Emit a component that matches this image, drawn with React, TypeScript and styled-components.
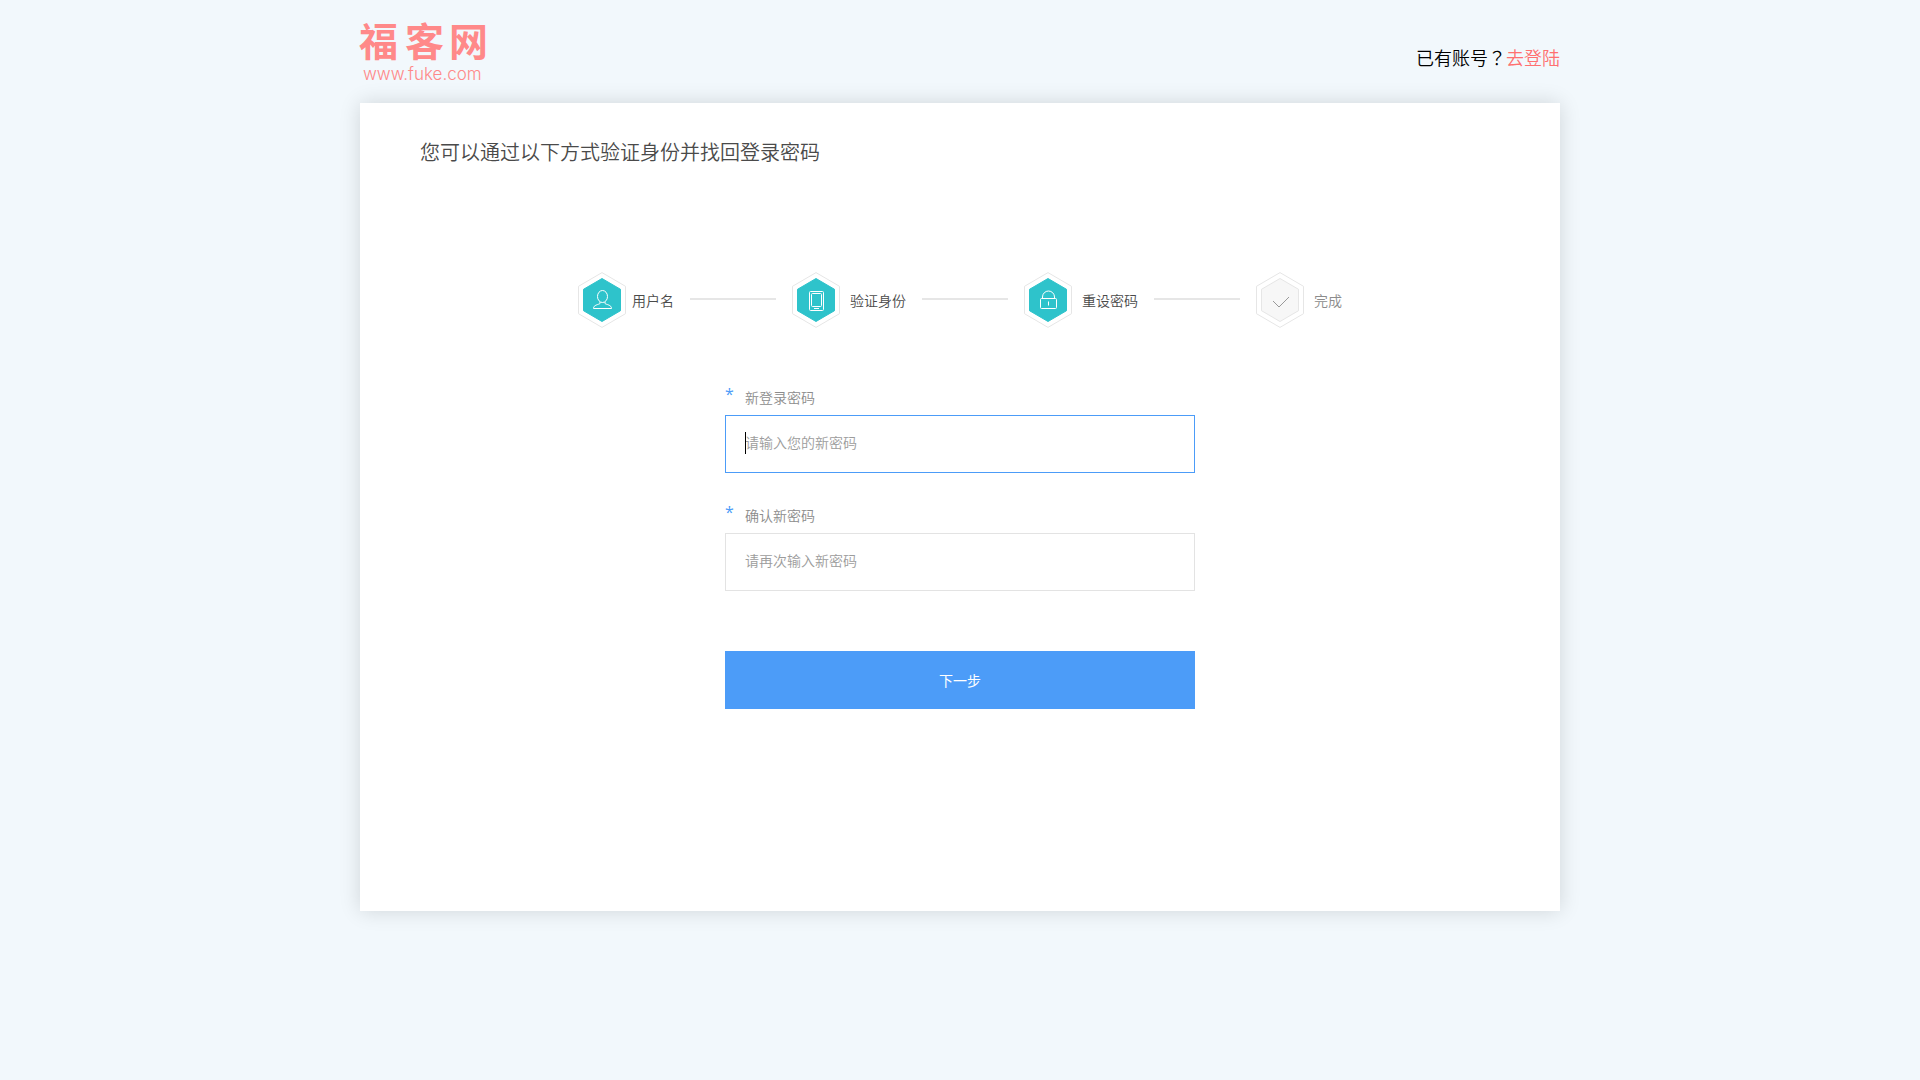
import React from 'react';
import styled, { createGlobalStyle } from 'styled-components';

const GlobalStyle = createGlobalStyle`
  * { box-sizing: border-box; }
  body {
    margin: 0;
    background: #f2f8fc;
    color: #4a4a4a;
    font: 350 14px/20px "Noto Sans CJK SC", "Noto Sans", sans-serif;
  }
`;

const Page = styled.div`
  max-width: 1200px;
  margin: 0 auto;
  padding-bottom: 80px;
`;

const Header = styled.header`
  display: flex;
  align-items: center;
  justify-content: space-between;
  padding: 16px 0 15px;
`;

const LogoLink = styled.a`
  display: block;
  height: 72px;
`;

const LogoMark = styled.svg`
  display: block;
  overflow: visible;
  fill: #ff8989;
`;

const LoginHint = styled.p`
  margin: 10px 0 0;
  color: #000;
  font-size: 18px;
  line-height: 24px;
`;

const QuestionMark = styled.span`
  font-family: "Noto Sans CJK TC", sans-serif;
`;

const LoginLink = styled.a`
  color: #ff7070;
  text-decoration: none;
`;

const Card = styled.main`
  padding: 33px 60px 202px;
  background: #fff;
  box-shadow: 0 0 20px rgba(0, 0, 0, 0.14);
`;

const Title = styled.h1`
  margin: 0;
  font-size: 20px;
  font-weight: 350;
  line-height: 32px;
`;

const Steps = styled.ol`
  display: flex;
  align-items: center;
  justify-content: center;
  margin: 104px 0 57px;
  padding: 0;
  list-style: none;
`;

const Step = styled.li<{ $gap: number; $muted?: boolean }>`
  display: flex;
  align-items: center;
  color: ${(p) => (p.$muted ? '#8c8c8c' : '#4a4a4a')};

  svg { margin-right: ${(p) => p.$gap}px; }

  &:not(:last-child)::after {
    content: '';
    width: 86px;
    height: 2px;
    margin: 0 16px 2px;
    background: #e6e6e6;
  }
`;

const StepIcon = styled.svg`
  display: block;
  flex: none;
`;

const StepLabel = styled.span`
  line-height: 20px;
`;

const Form = styled.form`
  display: flex;
  flex-direction: column;
  width: 100%;
  max-width: 470px;
  margin: 0 auto;
`;

const Field = styled.div`
  display: flex;
  flex-direction: column;
  margin-bottom: 30px;
`;

const Label = styled.label`
  display: flex;
  height: 30px;
  padding-top: 2px;
  color: #8c8c8c;
`;

const Required = styled.span`
  width: 20px;
  color: #4c9cf8;
  font: 400 16px/14px "Open Sans", "Noto Sans", sans-serif;
`;

const InputBox = styled.div`
  position: relative;
  display: flex;
`;

const Input = styled.input<{ $active?: boolean }>`
  width: 100%;
  height: 58px;
  padding: 0 19px 4px;
  border: 1px solid ${(p) => (p.$active ? '#4c9cf8' : '#e3e3e3')};
  border-radius: 0;
  outline: none;
  background: #fff;
  color: #333;
  caret-color: transparent;
  font: inherit;

  &::placeholder { color: #9c9c9c; opacity: 1; }
`;

const Caret = styled.span`
  position: absolute;
  top: 17px;
  left: 20px;
  width: 1px;
  height: 22px;
  background: #000;
`;

const NextButton = styled.button`
  height: 58px;
  margin-top: 30px;
  padding: 0;
  border: 0;
  background: #4c9cf8;
  color: #fff;
  font: inherit;
  font-weight: 400;
  cursor: pointer;
`;

function Logo() {
  return (
    <LogoMark width="130" height="72" viewBox="0 0 130 72" role="img" aria-label="福客网">
      <text x="-1 45 89" y="40" fontFamily="'Liberation Sans', 'Noto Sans CJK SC', sans-serif" fontSize="39" fontWeight="700">福客网</text>
      <text x="3" y="64" fontFamily="Inter, 'Liberation Sans', sans-serif" fontSize="17" fontWeight="300">www.fuke.com</text>
    </LogoMark>
  );
}

function Hexagon({ done = true, children }: { done?: boolean; children: React.ReactNode }) {
  return (
    <StepIcon width="48" height="56" viewBox="0 0 48 56" fill="none" aria-hidden="true">
      <path d="M24 .6 47.5 14.3v27.4L24 55.4.5 41.7V14.3z" stroke="#e6e6e6" />
      <path
        d="M24 6.5 42.5 17.3v21.4L24 49.5 5.5 38.7V17.3z"
        fill={done ? '#2ec3cb' : '#f7f7f7'}
        stroke={done ? '#2ec3cb' : '#e6e6e6'}
      />
      {children}
    </StepIcon>
  );
}

const UserGlyph = () => (
  <g stroke="#fff">
    <ellipse cx="24.500" cy="24.500" rx="5" ry="6" />
    <path d="M22 30v1.500c-1.500 1.300-6.500 1.200-6.500 5h18c0-3.800-5-3.700-6.500-5V30" />
  </g>
);

const PhoneGlyph = () => (
  <g stroke="#fff">
    <rect x="17.500" y="19.500" width="14" height="19" rx="1" />
    <rect x="19.500" y="21.500" width="10" height="13" rx="1" />
    <path d="M22 36.500h5" />
  </g>
);

const LockGlyph = () => (
  <g stroke="#fff">
    <rect x="16.500" y="26.500" width="16" height="10" rx="1" />
    <path d="M18.500 26.500v-1.500a6 6 0 0 1 12 0v1.500M24.500 29.500v4" />
  </g>
);

const CheckGlyph = () => <path d="M17 29l6 6 10-10" stroke="#999" />;

const steps = [
  { label: '用户名', icon: <UserGlyph />, done: true, gap: 6 },
  { label: '验证身份', icon: <PhoneGlyph />, done: true, gap: 10 },
  { label: '重设密码', icon: <LockGlyph />, done: true, gap: 10 },
  { label: '完成', icon: <CheckGlyph />, done: false, gap: 10 },
];

export default function App() {
  return (
    <>
      <GlobalStyle />
      <Page lang="zh-CN">
        <Header>
          <LogoLink href="#"><Logo /></LogoLink>
          <LoginHint>
            已有账号<QuestionMark lang="zh-TW">？</QuestionMark><LoginLink href="#">去登陆</LoginLink>
          </LoginHint>
        </Header>
        <Card>
          <Title>您可以通过以下方式验证身份并找回登录密码</Title>
          <Steps>
            {steps.map((s) => (
              <Step key={s.label} $gap={s.gap} $muted={!s.done}>
                <Hexagon done={s.done}>{s.icon}</Hexagon>
                <StepLabel>{s.label}</StepLabel>
              </Step>
            ))}
          </Steps>
          <Form onSubmit={(e) => e.preventDefault()}>
            <Field>
              <Label htmlFor="password"><Required>*</Required>新登录密码</Label>
              <InputBox>
                <Input id="password" type="password" placeholder="请输入您的新密码" $active />
                <Caret />
              </InputBox>
            </Field>
            <Field>
              <Label htmlFor="confirm"><Required>*</Required>确认新密码</Label>
              <InputBox>
                <Input id="confirm" type="password" placeholder="请再次输入新密码" />
              </InputBox>
            </Field>
            <NextButton type="submit">下一步</NextButton>
          </Form>
        </Card>
      </Page>
    </>
  );
}
